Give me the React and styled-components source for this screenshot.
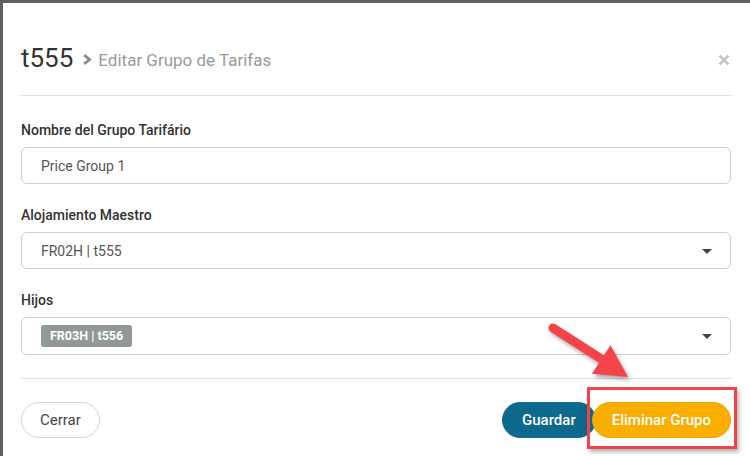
import React from "react";
import styled, { createGlobalStyle } from "styled-components";

const Global = createGlobalStyle`
  html, body { margin: 0; padding: 0; }
  body {
    background: #5f5f5f;
    font-family: Roboto, "Noto Sans", Arial, sans-serif;
    width: 750px;
    height: 456px;
    overflow: hidden;
  }
`;

const Page = styled.div`
  position: relative;
  width: 750px;
  height: 456px;
  padding: 3px 0 0 3px;
  box-sizing: border-box;
`;

const Modal = styled.div`
  background: #fff;
  height: 453px;
  padding: 0 19px 0 18px;
  box-sizing: border-box;
  display: flex;
  flex-direction: column;
`;

const Header = styled.div`
  display: flex;
  align-items: center;
  padding: 40px 0 22px;
  border-bottom: 1px solid #e2e2e2;
`;

const Title = styled.h1`
  margin: 0;
  font-size: 26px;
  line-height: 30px;
  font-weight: 400;
  color: #333;
`;

const Crumb = styled.span`
  display: flex;
  align-items: center;
  margin-left: 9px;
  margin-top: 3px;
  font-size: 17px;
  color: #9a9a9a;
  gap: 6px;
`;

const Close = styled.button`
  margin-left: auto;
  margin-right: 1px;
  margin-top: 3px;
  border: 0;
  background: none;
  padding: 0;
  display: flex;
`;

const Body = styled.div`
  display: flex;
  flex-direction: column;
  gap: 21px;
  padding: 24px 0 23px;
  border-bottom: 1px solid #e2e2e2;
`;

const Field = styled.div`
  display: flex;
  flex-direction: column;
  gap: 7px;
`;

const Label = styled.label`
  font-size: 14px;
  line-height: 20px;
  font-weight: 500;
  color: #333;
`;

const Box = styled.div`
  height: ${(p) => p.$h || 37}px;
  box-sizing: border-box;
  border: 1px solid #cfcfcf;
  border-radius: 6px;
  display: flex;
  align-items: center;
  padding: 0 18px 0 19px;
  font-size: 14px;
  color: #555;
`;

const Caret = styled.span`
  margin-left: auto;
  width: 0;
  height: 0;
  border-left: 5px solid transparent;
  border-right: 5px solid transparent;
  border-top: 5px solid #444;
  margin-top: 1px;
`;

const Tag = styled.span`
  background: #8f9a98;
  color: #fff;
  font-size: 12.5px;
  font-weight: 700;
  height: 22px;
  line-height: 22px;
  padding: 0 9px;
  border-radius: 3px;
`;

const Footer = styled.div`
  display: flex;
  align-items: center;
  padding-top: 23px;
`;

const Btn = styled.button`
  height: 36px;
  border-radius: 18px;
  font-family: inherit;
  font-size: 15px;
  padding: 0 ${(p) => p.$pad || 19}px;
  margin-right: ${(p) => p.$mr || 0}px;
  cursor: pointer;
  border: 1px solid ${(p) => p.$border};
  background: ${(p) => p.$bg};
  color: ${(p) => p.$color};
  font-weight: ${(p) => p.$weight || 400};
`;

const Right = styled.div`
  margin-left: auto;
  display: flex;
  align-items: center;
`;

const Highlight = styled.div`
  position: relative;
  display: flex;
`;

const RedBox = styled.div`
  position: absolute;
  top: -15px;
  left: -5px;
  right: -6px;
  bottom: -11px;
  border: 3px solid #f0434a;
  box-shadow: 2px 3px 4px rgba(0, 0, 0, 0.3);
  pointer-events: none;
`;

const ArrowSvg = styled.svg`
  position: absolute;
  left: 540px;
  top: 315px;
  overflow: visible;
  filter: drop-shadow(2px 3px 2px rgba(0, 0, 0, 0.35));
`;

export default function App() {
  return (
    <>
      <Global />
      <Page>
        <Modal>
          <Header>
            <Title>t555</Title>
            <Crumb>
              <svg width="10" height="11" viewBox="0 0 10 11">
                <path d="M2.2 1.2 L7.6 5.5 L2.2 9.8" fill="none" stroke="#8a8a8a" strokeWidth="2.8" />
              </svg>
              Editar Grupo de Tarifas
            </Crumb>
            <Close aria-label="close">
              <svg width="12" height="12" viewBox="0 0 12 12">
                <path d="M1.5 1.5 L10.5 10.5 M10.5 1.5 L1.5 10.5" stroke="#c6c6c6" strokeWidth="2.6" />
              </svg>
            </Close>
          </Header>
          <Body>
            <Field>
              <Label>Nombre del Grupo Tarifário</Label>
              <Box>Price Group 1</Box>
            </Field>
            <Field>
              <Label>Alojamiento Maestro</Label>
              <Box>
                FR02H | t555
                <Caret />
              </Box>
            </Field>
            <Field>
              <Label>Hijos</Label>
              <Box $h={38}>
                <Tag>FR03H | t556</Tag>
                <Caret />
              </Box>
            </Field>
          </Body>
          <Footer>
            <Btn $border="#d4d4d4" $bg="#fff" $color="#444" $pad={18}>Cerrar</Btn>
            <Right>
              <Btn $border="#0d6a8d" $bg="#0d6a8d" $color="#fff" $weight={500} $pad={19} $mr={-4}>Guardar</Btn>
              <Highlight>
                <RedBox />
                <Btn $border="#e9a300" $bg="#f9ae00" $color="#fff" $weight={500} $pad={19}>Eliminar Grupo</Btn>
              </Highlight>
            </Right>
          </Footer>
        </Modal>
        <ArrowSvg width="100" height="70" viewBox="0 0 100 70">
          <line x1="13" y1="13" x2="63" y2="45" stroke="#f5434a" strokeWidth="9" strokeLinecap="round" />
          <polygon points="88,62 70.5,30.3 51.9,58.7" fill="#f5434a" />
        </ArrowSvg>
      </Page>
    </>
  );
}
